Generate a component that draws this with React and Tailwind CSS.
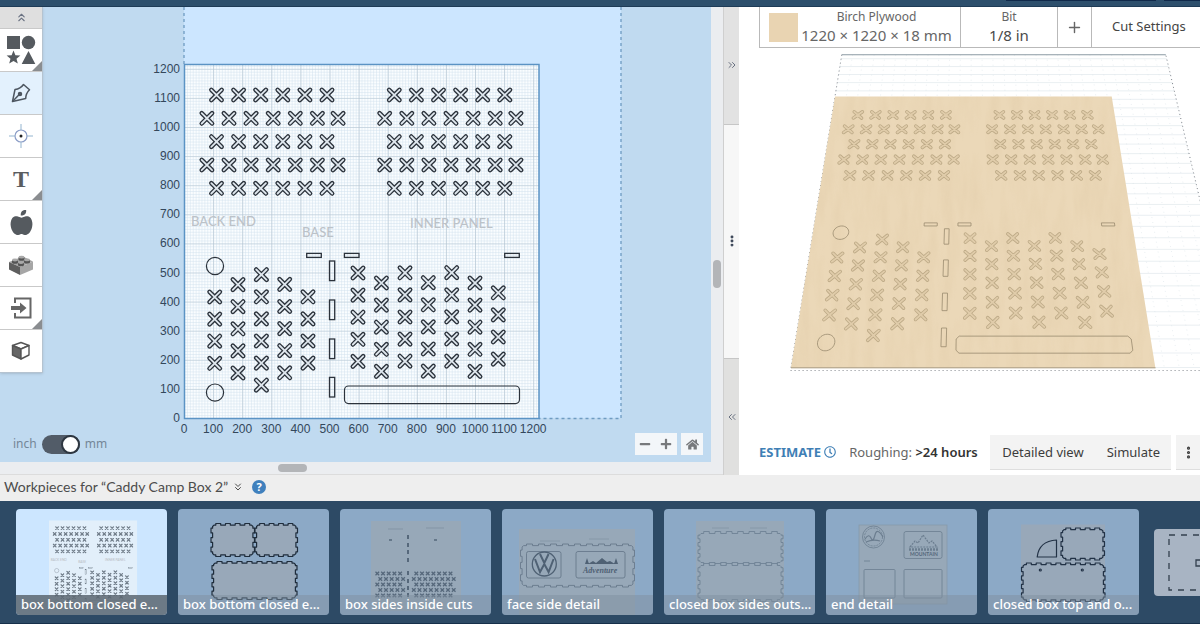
import { ChevronsDown, ChevronsLeft, ChevronsRight, ChevronsUp, EllipsisVertical, Plus } from 'lucide-react';
import { FaAppleAlt, FaHome, FaMinus, FaPlus, FaRegClock } from 'react-icons/fa';

// Canvas coordinates: one unit is one pixel, the board spans 184..539 by 64..418.
const BOARD = { x: 184, y: 64, w: 355, h: 354 };
const STEP = 22.1;

function row(x, y, n) {
  return Array.from({ length: n }, (_, i) => [x + i * STEP - (n === 7 && i === 6 ? 1.4 : 0), y]);
}

function col(x, y, n) {
  return Array.from({ length: n }, (_, i) => [x, y + i * STEP]);
}

const CROSSES = [
  ...[216.5, 394.3].flatMap((x) => [
    ...row(x, 95, 6),
    ...row(x - 9.6, 118.3, 7),
    ...row(x, 141.7, 6),
    ...row(x - 9.6, 165, 7),
    ...row(x, 188.3, 6),
  ]),
  ...col(214.7, 297, 4),
  ...col(238, 284.6, 5),
  ...col(261.4, 274.7, 6),
  ...col(284.7, 284.4, 5),
  ...col(308, 296.8, 4),
  ...col(358, 273, 5),
  ...col(381.4, 283, 5),
  ...col(405, 272.8, 5),
  ...col(428.3, 282.7, 5),
  ...col(451.7, 272.7, 5),
  ...col(475, 283, 5),
  ...col(498.3, 292.8, 4),
];

const CIRCLES = [
  [215, 266, 8.6],
  [215, 392.6, 8.6],
];

const SLOTS = [
  [306.7, 253.4, 14.6, 4],
  [344.4, 253.4, 14.6, 4],
  [504.7, 253.4, 14.6, 4],
  [329.5, 261, 5.2, 19.6],
  [329.5, 300, 5.2, 19.6],
  [329.5, 339, 5.2, 19.6],
  [329.5, 377.4, 5.2, 19.6],
];

const TRAY = [344.5, 386, 175, 17.6];

const crossPath = ([x, y]) =>
  `M${x - 5.2} ${y - 5.2}L${x + 5.2} ${y + 5.2}M${x - 5.2} ${y + 5.2}L${x + 5.2} ${y - 5.2}`;

function Cuts({ ink = '#2b323b', inner = '#dfe7ee' }) {
  return (
    <g fill="none" stroke={ink}>
      {CROSSES.map((c) => (
        <g key={c.join()} strokeLinecap="round">
          <path d={crossPath(c)} strokeWidth="4.5" />
          <path d={crossPath(c)} strokeWidth="1.8" stroke={inner} />
        </g>
      ))}
      {CIRCLES.map(([x, y, r]) => (
        <circle key={y} cx={x} cy={y} r={r} strokeWidth="1.2" />
      ))}
      {SLOTS.map(([x, y, w, h]) => (
        <rect key={`${x}-${y}`} x={x} y={y} width={w} height={h} strokeWidth="1.3" />
      ))}
      <rect x={TRAY[0]} y={TRAY[1]} width={TRAY[2]} height={TRAY[3]} rx="4" strokeWidth="1.2" />
    </g>
  );
}

function PartNames() {
  return (
    <g fill="#bcc2c8" fontFamily="Lato, sans-serif" fontSize="13" fontWeight="500">
      <text x="191" y="226">BACK END</text>
      <text x="302" y="237">BASE</text>
      <text x="410" y="228">INNER PANEL</text>
    </g>
  );
}

const TICKS = Array.from({ length: 13 }, (_, i) => i * 100);

function Drawing() {
  return (
    <svg viewBox="0 7 711 455" preserveAspectRatio="xMinYMin meet" className="absolute inset-0 size-full">
      <defs>
        <pattern id="minor" x="184" y="418" width="2.91" height="2.91" patternUnits="userSpaceOnUse">
          <path d="M0 0H2.91M0 0V2.91" stroke="#cddeea" strokeWidth="0.9" fill="none" />
        </pattern>
        <pattern id="major" x="184" y="418" width="29.1" height="29.1" patternUnits="userSpaceOnUse">
          <path d="M0 0H29.1M0 0V29.1" stroke="#b3c3d0" strokeWidth="1.2" fill="none" />
        </pattern>
      </defs>
      <rect x="184" y="7" width="437" height="411" fill="#cce6ff" />
      <path d="M184 7V64M621 7V418.5H539" fill="none" stroke="#6f9cc2" strokeWidth="1.3" strokeDasharray="3 3" />
      <rect x={BOARD.x} y={BOARD.y} width={BOARD.w} height={BOARD.h} fill="#fafdff" />
      <rect x={BOARD.x} y={BOARD.y} width={BOARD.w} height={BOARD.h} fill="url(#minor)" />
      <rect x={BOARD.x} y={BOARD.y} width={BOARD.w} height={BOARD.h} fill="url(#major)" />
      <rect x="184.5" y="64.5" width="354.5" height="354" fill="none" stroke="#5b93c4" strokeWidth="1.5" />
      <PartNames />
      <Cuts />
      <g fill="#33475b" fontFamily="Liberation Sans, sans-serif" fontSize="12">
        {TICKS.map((t) => (
          <g key={t}>
            <text x={184 + t * 0.291} y="433" textAnchor="middle">{t}</text>
            <text x="180" y={422 - t * 0.291} textAnchor="end">{t}</text>
          </g>
        ))}
      </g>
    </svg>
  );
}

// Perspective projection of the board onto the preview.
const K = 364.3 / 276.7;

function project(x, y) {
  const u = (x - BOARD.x) / BOARD.w;
  const v = (y - BOARD.y) / BOARD.h;
  const w = K * (1 - v) + v;
  const left = (835 * K * (1 - v) + 791 * v) / w;
  return [left + (364.3 * u) / w, (96.5 * K * (1 - v) + 367.5 * v) / w];
}

function projected(points, close = true) {
  return `M${points.map(([x, y]) => project(x, y).map((n) => n.toFixed(2)).join(' ')).join('L')}${close ? 'Z' : ''}`;
}

function box([x, y, w, h], c = 0) {
  return [
    [x + c, y], [x + w - c, y], [x + w, y + c], [x + w, y + h - c],
    [x + w - c, y + h], [x + c, y + h], [x, y + h - c], [x, y + c],
  ];
}

function ring([x, y, r]) {
  return Array.from({ length: 32 }, (_, i) => {
    const a = (i * Math.PI) / 16;
    return [x + r * Math.cos(a), y + r * Math.sin(a)];
  });
}

const BED_TOP = -11.5;
const GRID_ROWS = Array.from({ length: 30 }, (_, i) => 418 - i * 14.55);
const GRID_COLS = Array.from({ length: 31 }, (_, i) => 184 + i * 14.55);

function Preview() {
  return (
    <svg viewBox="739 48 461 387" preserveAspectRatio="xMinYMin meet" className="min-h-0 w-full flex-1">
      <defs>
        <filter id="grain" x="0" y="0" width="1" height="1">
          <feTurbulence type="fractalNoise" baseFrequency="0.09 0.018" numOctaves="4" seed="8" />
          <feColorMatrix values="0 0 0 0 0.66  0 0 0 0 0.5  0 0 0 0 0.3  0.9 0 0 0 -0.3" />
          <feComposite in2="SourceGraphic" operator="in" />
        </filter>
      </defs>
      <g fill="none" stroke="#dbe4ea" strokeWidth="0.6">
        {GRID_ROWS.map((y) => (
          <path key={y} d={projected([[184, y], [621, y]], false)} />
        ))}
        {GRID_COLS.map((x) => (
          <path key={x} d={projected([[x, BED_TOP], [x, 418]], false)} strokeDasharray="1 4" />
        ))}
      </g>
      <path d={projected([[184, BED_TOP], [621, BED_TOP]], false)} stroke="#8b9aa3" strokeWidth="1.2" />
      <path
        d={projected([[184, BED_TOP], [184, 421], [621, 421], [621, BED_TOP]], false)}
        fill="none"
        stroke="#80858c"
        strokeDasharray="1 3"
      />
      <path d={projected(box([184, 64, 355, 354]))} fill="#ebd8b8" />
      <path d={projected(box([184, 64, 355, 354]))} fill="#ebd8b8" filter="url(#grain)" opacity="0.36" />
      <path d="M791 367.8H1155.5" stroke="#a99878" />
      <g fill="none" stroke="#bca986">
        {CROSSES.map(([x, y]) => {
          const d =
            projected([[x - 5.2, y - 5.2], [x + 5.2, y + 5.2]], false) +
            projected([[x - 5.2, y + 5.2], [x + 5.2, y - 5.2]], false);
          return (
            <g key={`${x}-${y}`} strokeLinecap="round">
              <path d={d} strokeWidth="3.4" />
              <path d={d} strokeWidth="1.8" stroke="#e0ccaa" />
            </g>
          );
        })}
        <g stroke="#998a6f" strokeWidth="0.8">
          {CIRCLES.map((c) => <path key={c[1]} d={projected(ring(c))} />)}
          {SLOTS.map((s) => <path key={s.join()} d={projected(box(s))} />)}
          <path d={projected(box(TRAY, 3))} strokeLinejoin="round" />
        </g>
      </g>
    </svg>
  );
}

const TOOLS = [
  {
    name: 'Shapes',
    more: true,
    icon: (
      <svg width="30" height="30" viewBox="0 0 30 30" fill="#555a5f">
        <path d="M1 1h13v13H1zM22.500 16l6.800 13H15.700z" />
        <circle cx="22.500" cy="7.500" r="6.700" />
        <path d="M7.500 15.500l1.900 4.700 5 .3-3.900 3.200 1.300 4.900-4.300-2.700-4.300 2.700 1.300-4.900-3.900-3.200 5-.3z" />
      </svg>
    ),
  },
  {
    name: 'Pen',
    active: true,
    icon: (
      <svg width="20" height="20" viewBox="0 0 20 20" fill="none" stroke="#4d5660" strokeWidth="1.500" strokeLinejoin="round">
        <path d="M1.500 18.500L4 6.500Q9.500 5.800 12.500 1.500L18.500 6.800Q14.800 10.500 14.700 15.500z" />
        <path d="M1.500 18.500L8 11.800" />
        <circle cx="9" cy="11" r="1.500" fill="#4d5660" />
      </svg>
    ),
  },
  {
    name: 'Drill',
    icon: (
      <svg width="24" height="24" viewBox="0 0 24 24" fill="none" stroke="#8a9cc6">
        <circle cx="12" cy="12" r="6" strokeWidth="1.200" />
        <path d="M12 0v6M12 18v6M0 12h6M18 12h6" stroke="#93b4cf" />
        <circle cx="12" cy="12" r="1.500" fill="#222" stroke="none" />
      </svg>
    ),
  },
  { name: 'Text', more: true, icon: <span className="font-['Liberation_Serif',serif] text-2xl font-bold">T</span> },
  { name: 'Icons', icon: <FaAppleAlt size={25} color="#555a5f" /> },
  {
    name: 'Apps',
    icon: (
      <svg width="26" height="20" viewBox="0 0 26 20">
        <path d="M1 7L15 1.500 25 6.500 12 12z" fill="#a4a4a4" />
        <path d="M1 7l11 5v8L1 14.500z" fill="#5e5e5e" />
        <path d="M12 12l13-5.500v8L12 20z" fill="#a6a6a6" />
        <g fill="#555">
          <path d="M4 5.200v2a3 1.500 0 0 0 6 0v-2zM10.500 2.200v2a3 1.500 0 0 0 6 0v-2zM10 7.800v2a3 1.500 0 0 0 6 0v-2zM16 5v2a3 1.500 0 0 0 6 0V5z" />
        </g>
        <g fill="#a9a9a9">
          <ellipse cx="7" cy="5" rx="3" ry="1.400" />
          <ellipse cx="13.500" cy="2.200" rx="3" ry="1.400" />
          <ellipse cx="13" cy="7.600" rx="3" ry="1.400" />
          <ellipse cx="19" cy="4.900" rx="3" ry="1.400" />
        </g>
      </svg>
    ),
  },
  {
    name: 'Import',
    more: true,
    icon: (
      <svg width="22" height="22" viewBox="0 0 22 22">
        <path d="M5 6V1.500h15.500v19H5V16" fill="none" stroke="#666" strokeWidth="2" />
        <path d="M1 9h9V5.500l6.500 5.500-6.500 5.500V13H1z" fill="#666" />
      </svg>
    ),
  },
  {
    name: '3D',
    icon: (
      <svg width="20" height="20" viewBox="0 0 20 20" stroke="#555" strokeWidth="1.400" strokeLinejoin="round">
        <path d="M1.500 4.500L10 1.500l8 3L10 8z" fill="#fff" />
        <path d="M1.500 4.500L10 8v10l-8.500-4z" fill="#666" />
        <path d="M10 8l8-3.500V14l-8 4z" fill="#fff" />
      </svg>
    ),
  },
];

function Toolbar() {
  return (
    <nav className="relative w-[43px] border-r border-b border-[#b5c3d0] bg-white shadow-sm">
      <button aria-label="Collapse tools" className="flex h-[21px] w-full items-center justify-center bg-[#dfdfdf] text-gray-500">
        <ChevronsUp size={13} />
      </button>
      {TOOLS.map((t) => (
        <button
          key={t.name}
          aria-label={t.name}
          className={`relative flex h-[43px] w-full items-center justify-center border-t border-[#c9c9c9] text-[#5a5d60] ${t.active ? 'bg-[#e3f1fd]' : 'bg-white'}`}
        >
          {t.icon}
          {t.more && (
            <svg width="10" height="10" viewBox="0 0 10 10" className="absolute right-0 bottom-0">
              <path d="M10 0v10H0z" fill="#8a8d90" />
            </svg>
          )}
        </button>
      ))}
    </nav>
  );
}

function Workspace() {
  return (
    <section className="flex min-w-0 flex-[723] flex-col bg-[#ebedf0]">
      <div className="flex min-h-0 flex-1">
        <div className="relative flex min-w-0 flex-1 flex-col items-start overflow-hidden bg-[#c0daf0]">
          <Drawing />
          <Toolbar />
          <div className="relative mt-auto flex w-full items-center px-2 pb-[7px]">
            <label className="flex items-center gap-[5px] pl-[5px] text-xs text-[#748697]">
              inch
              <input
                type="checkbox"
                role="switch"
                defaultChecked
                aria-label="Use millimetres"
                className="flex h-[19px] w-[38px] appearance-none items-center rounded-full bg-[#525c68] before:size-[19px] before:rounded-full before:border-2 before:border-[#2d3640] before:bg-white checked:justify-end"
              />
              mm
            </label>
            <div className="ml-auto flex gap-1 text-[#77797c]">
              <div className="flex h-[22px] bg-[#f3f6f9]">
                <button aria-label="Zoom out" className="w-[21px] pl-1"><FaMinus size={12} /></button>
                <button aria-label="Zoom in" className="w-[21px] pl-1"><FaPlus size={12} /></button>
              </div>
              <button aria-label="Fit to view" className="flex size-[22px] items-center justify-center bg-[#f3f6f9]">
                <FaHome size={13} />
              </button>
            </div>
          </div>
        </div>
        <div className="flex w-3 items-center justify-center pt-[78px]">
          <div className="h-7 w-2 rounded-full bg-[#b3b5b8]" />
        </div>
      </div>
      <div className="flex h-[13px] items-center border-b border-[#dcdcdc] pl-[38.5%]">
        <div className="h-2 w-[29px] rounded-full bg-[#b3b5b8]" />
      </div>
    </section>
  );
}

function Splitter() {
  return (
    <div className="flex w-4 flex-col border-l border-[#cfcfcf] text-gray-500">
      <button aria-label="Expand design" className="flex flex-1 items-center justify-center bg-[#e2e2e2]">
        <ChevronsRight size={12} />
      </button>
      <div className="flex flex-2 items-center justify-center border-y border-[#c6c6c6] bg-[#f7f7f7] text-gray-700">
        <EllipsisVertical size={14} strokeWidth={3} />
      </div>
      <button aria-label="Expand preview" className="flex flex-1 items-center justify-center bg-[#e0e0df]">
        <ChevronsLeft size={12} />
      </button>
    </div>
  );
}

function PreviewPane() {
  return (
    <section className="flex min-w-0 flex-[461] flex-col overflow-hidden bg-white">
      <div className="ml-5 flex h-[41px] shrink-0 border-b border-l border-[#b9b9b9] text-[#666]">
        <button className="flex w-[201px] shrink-0 items-center border-r border-[#b9b9b9] pr-[5px] pl-[9px]">
          <span className="size-[29px] shrink-0 bg-[#e9d4b2]" />
          <span className="flex flex-1 flex-col items-center whitespace-nowrap">
            <span className="text-xs leading-4">Birch Plywood</span>
            <span className="text-[15px] leading-5">1220 × 1220 × 18 mm</span>
          </span>
        </button>
        <button className="flex w-[97px] shrink-0 flex-col items-center justify-center border-r border-[#b9b9b9]">
          <span className="text-xs leading-4">Bit</span>
          <span className="text-[15px] leading-5 text-[#4a4a4a]">1/8 in</span>
        </button>
        <button aria-label="Add bit" className="flex w-[34px] shrink-0 items-center justify-center border-r border-[#b9b9b9]">
          <Plus size={17} />
        </button>
        <button className="shrink-0 px-5 text-[13px] text-[#444]">Cut Settings</button>
      </div>
      <Preview />
      <div className="flex h-10 shrink-0 items-start pl-5 text-[13px] leading-[34px] whitespace-nowrap">
        <button className="flex items-center gap-[3px] font-bold text-[#3f7fb5]">
          ESTIMATE <FaRegClock size={12} />
        </button>
        <span className="ml-[13px] text-[#666]">
          Roughing: <b className="font-semibold text-[#333]">&gt;24 hours</b>
        </span>
        <div className="ml-auto flex shrink-0 text-[#3c3c3c]">
          <button className="border-b border-[#dedede] bg-[#f3f3f3] px-3">Detailed view</button>
          <button className="border-b border-[#dedede] bg-[#f3f3f3] px-[11px]">Simulate</button>
          <button aria-label="More" className="ml-[5px] flex w-6 items-center justify-center border-b border-[#dedede] bg-[#f3f3f3]">
            <EllipsisVertical size={15} strokeWidth={3} />
          </button>
        </div>
      </div>
    </section>
  );
}

// Outline with finger joints: n tabs along the top and bottom, m along the sides.
function fingers(x, y, w, h, n, m, d = 1.6) {
  const pts = [];
  for (let i = 0; i < n; i++) {
    const o = i % 2 ? 0 : d;
    pts.push([x + (w * i) / n + (i ? 0 : 3), y + o], [x + (w * (i + 1)) / n - (i === n - 1 ? 3 : 0), y + o]);
  }
  for (let i = 0; i < m; i++) {
    const o = i % 2 ? 0 : d;
    pts.push([x + w - o, y + (h * i) / m + (i ? 0 : 3)], [x + w - o, y + (h * (i + 1)) / m - (i === m - 1 ? 3 : 0)]);
  }
  for (let i = n; i > 0; i--) {
    const o = i % 2 ? d : 0;
    pts.push([x + (w * i) / n - (i === n ? 3 : 0), y + h - o], [x + (w * (i - 1)) / n + (i === 1 ? 3 : 0), y + h - o]);
  }
  for (let i = m; i > 0; i--) {
    const o = i % 2 ? d : 0;
    pts.push([x + o, y + (h * i) / m - (i === m ? 3 : 0)], [x + o, y + (h * (i - 1)) / m + (i === 1 ? 3 : 0)]);
  }
  return `M${pts.map((p) => p.map((v) => v.toFixed(1)).join(' ')).join('L')}Z`;
}

function MiniCrosses({ x, y, n }) {
  return Array.from({ length: n }, (_, i) => (
    <path key={i} d={`M${x + i * 5.7} ${y}l3.600 3.600m0 -3.600l-3.600 3.600`} strokeWidth="1.300" />
  ));
}

const WORKPIECES = [
  {
    name: 'box bottom closed e...',
    active: true,
    art: (
      <g transform="translate(33 11.500) scale(.248) translate(-184 -64)">
        <rect x="184" y="64" width="355" height="354" fill="#e2effa" />
        <PartNames />
        <Cuts ink="#5f6b78" inner="#8d99a5" />
      </g>
    ),
  },
  {
    name: 'box bottom closed e...',
    art: (
      <g fill="#98a8b9" stroke="#1f2d3c" strokeWidth="1.200" strokeLinejoin="round">
        <path d={fingers(33, 14.5, 43.5, 33, 9, 7)} />
        <path d={fingers(77, 14.5, 42.5, 33, 9, 7)} />
        <path d={fingers(34, 52.5, 85, 38, 17, 9)} />
      </g>
    ),
  },
  {
    name: 'box sides inside cuts',
    art: (
      <g stroke="#56687b" fill="none">
        <rect x="31" y="12" width="90" height="90" fill="#97a8b8" stroke="none" />
        <path d="M48 20h15M86 19h18" stroke="#8394a5" />
        <path d="M49 31h3M94 31h3" strokeWidth="1.500" />
        <path d="M68 26v4M68 34v4M68 41v4M68 49v4M68 62v4M68 70v4M68 77v4M68 84v4" strokeWidth="2" />
        {[0, 2, 4].map((i) => (
          <g key={i}>
            <MiniCrosses x={35.5} y={62.7 + i * 5.5} n={5} />
            <MiniCrosses x={74.5} y={62.7 + i * 5.5} n={7} />
          </g>
        ))}
        {[1, 3].map((i) => (
          <g key={i}>
            <MiniCrosses x={38.5} y={62.7 + i * 5.5} n={5} />
            <MiniCrosses x={72} y={62.7 + i * 5.5} n={8} />
          </g>
        ))}
      </g>
    ),
  },
  {
    name: 'face side detail',
    art: (
      <g stroke="#627486" fill="none" strokeWidth="0.800">
        <rect x="17" y="20" width="116" height="86" fill="#97a8b8" stroke="none" />
        <path d="M38 32h20M87 30h20" stroke="#8394a5" />
        <path d={fingers(18.5, 35, 114, 43, 19, 7)} />
        <rect x="24.500" y="42.500" width="34.500" height="26.500" rx="2" />
        <rect x="74" y="42.500" width="49" height="26.500" rx="2" />
        <g stroke="#4f6174">
          <circle cx="42.300" cy="55" r="12" strokeWidth="1.300" />
          <path d="M38 45l4.300 9 4.300-9M33 50l5 13 4.300-8 4.300 8 5-13" strokeWidth="2" />
        </g>
        <path d="M86 55l5-3 3 2 6-5 5 4 3-1 5 3zM83 55l2-6 2 6zM112 55l2-6 2 6z" fill="#4f6174" stroke="none" />
        <text x="81" y="64" fill="#4f6174" stroke="none" fontSize="8" fontStyle="italic" fontWeight="700" fontFamily="Liberation Serif, serif">
          Adventure
        </text>
      </g>
    ),
  },
  {
    name: 'closed box sides outs...',
    art: (
      <g stroke="#6a7d90" fill="#97a8b8" strokeWidth="0.800">
        <rect x="32" y="12" width="88" height="88" stroke="none" />
        <path d="M48 19h17M86 19h17" stroke="#8394a5" />
        <path d={fingers(34, 22.5, 85, 33, 15, 9, 2)} />
        <path d={fingers(34, 54.5, 85, 38, 15, 9, 2)} />
      </g>
    ),
  },
  {
    name: 'end detail',
    art: (
      <g stroke="#6b7d8f" fill="none" strokeWidth="0.800">
        <rect x="33" y="16" width="88" height="79" fill="#97a8b8" stroke="#8799aa" />
        <circle cx="47.500" cy="28" r="11" />
        <circle cx="47.500" cy="28" r="9" strokeDasharray="2 1" />
        <path d="M39 30q4-6 6-1t4-3 8 2M40 33q7-3 14-1" strokeWidth="1.200" />
        <rect x="78" y="22.500" width="38" height="27" rx="2" />
        <rect x="38" y="60.500" width="31" height="28.500" rx="1" />
        <rect x="78" y="60.500" width="38" height="28.500" rx="1" />
        <path d="M38 52h6" />
        <path d="M84 38l5-6 3 2 5-8 6 8 3-2 5 6z" strokeWidth="1.200" strokeDasharray="2 1" />
        <text x="84" y="47" fill="#55677a" stroke="none" fontSize="5" fontWeight="700" fontFamily="Lato, sans-serif">MOUNTAIN</text>
        <path d="M83 40.500h29" strokeWidth="2.500" strokeDasharray="2 1" />
      </g>
    ),
  },
  {
    name: 'closed box top and o...',
    art: (
      <g fill="#98a8b9" stroke="#223246" strokeWidth="1.200" strokeLinejoin="round">
        <rect x="33" y="15.500" width="84" height="76" stroke="none" />
        <path d={fingers(73, 19, 43.5, 32, 9, 7)} />
        <path d={fingers(33.5, 54, 83.5, 38.5, 17, 9)} />
        <path d="M68.500 31v17H49.200Q51 32 68.500 31z" />
        <circle cx="52.300" cy="61" r="1" />
        <circle cx="94.300" cy="61" r="1" />
      </g>
    ),
  },
];

function Workpiece({ item }) {
  return (
    <button
      className={`relative h-[106px] w-[151px] shrink-0 overflow-hidden rounded-sm ${item.active ? 'bg-[#cce6ff]' : 'bg-[#8ca9c6]'}`}
    >
      <svg viewBox="0 0 151 106" className="size-full">{item.art}</svg>
      <span
        className={`absolute inset-x-0 bottom-0 overflow-hidden pb-0.5 pl-[5px] text-left text-[13px] leading-[18px] font-medium whitespace-nowrap text-white ${item.active ? 'bg-[#5b6671]/85' : 'bg-[#7f90a0]/50'}`}
      >
        {item.name}
      </span>
    </button>
  );
}

export default function App() {
  return (
    <div className="flex h-screen flex-col overflow-hidden bg-white font-['Noto_Sans',sans-serif]">
      <header className="flex h-[7px] shrink-0 items-start justify-end gap-2 border-b border-[#1e3b56] bg-[#2d4f6c]">
        <div className="h-px w-[150px] bg-[#10294a]" />
        <div className="h-px w-9 bg-[#10294a]" />
      </header>
      <main className="flex min-h-0 flex-1">
        <Workspace />
        <Splitter />
        <PreviewPane />
      </main>
      <div className="flex h-[26px] shrink-0 items-center bg-[#eeeeee] pb-0.5 pl-1 text-[#4c4c4c]">
        <h2 className="font-['Lato',sans-serif] text-sm">Workpieces for “Caddy Camp Box 2”</h2>
        <button aria-label="Workpiece menu" className="ml-1"><ChevronsDown size={12} /></button>
        <button className="ml-2 size-[14px] rounded-full bg-[#3f80bd] text-[11px] leading-[14px] font-bold text-white">?</button>
      </div>
      <footer className="mb-[2px] flex h-[123px] shrink-0 items-center gap-[11px] overflow-hidden border-b border-[#16304a] bg-[#2d4a65] pl-4">
        {WORKPIECES.map((w, i) => <Workpiece key={i} item={w} />)}
        <button aria-label="Add workpiece" className="ml-1 h-[67px] w-[118px] shrink-0 rounded-sm bg-[#a8b4c3]">
          <svg viewBox="0 0 118 67" fill="none" stroke="#33404f" strokeWidth="1.300" className="size-full">
            <rect x="15" y="6" width="88" height="55" strokeDasharray="6 6" />
            <path d="M55 31V23H63V31H71V37H63V45H55V37H42V31z" />
          </svg>
        </button>
      </footer>
    </div>
  );
}
